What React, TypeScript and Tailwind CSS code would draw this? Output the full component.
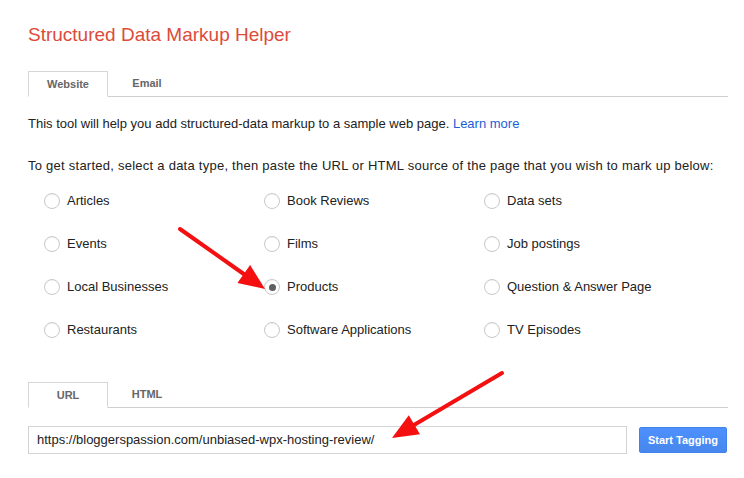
import React from "react";

const types = [
  ["Articles", "Book Reviews", "Data sets"],
  ["Events", "Films", "Job postings"],
  ["Local Businesses", "Products", "Question & Answer Page"],
  ["Restaurants", "Software Applications", "TV Episodes"],
];

const Radio: React.FC<{ checked?: boolean }> = ({ checked }) => (
  <span className="w-[16px] h-[16px] rounded-full border border-[#c8c8c8] bg-white flex items-center justify-center shrink-0 shadow-[inset_0_1px_1px_rgba(0,0,0,0.05)]">
    {checked && <span className="w-[7px] h-[7px] rounded-full bg-[#5f5f5f]" />}
  </span>
);

const Tabs: React.FC<{ items: string[] }> = ({ items }) => (
  <div className="flex h-[26px] border-b border-[#cfcfcf] w-[700px]">
    <div className="w-[80px] h-[26px] border border-[#d6d6d6] border-b-white bg-white flex items-center justify-center text-[11px] font-bold text-[#666]">
      {items[0]}
    </div>
    <div className="w-[78px] flex items-center justify-center text-[11px] font-bold text-[#666]">
      {items[1]}
    </div>
  </div>
);

const Arrow: React.FC<{ x1: number; y1: number; x2: number; y2: number }> = ({ x1, y1, x2, y2 }) => {
  const ang = Math.atan2(y2 - y1, x2 - x1);
  const len = 26;
  const w = 11;
  const bx = x2 - len * Math.cos(ang);
  const by = y2 - len * Math.sin(ang);
  const px = -Math.sin(ang) * w;
  const py = Math.cos(ang) * w;
  return (
    <g>
      <line x1={x1} y1={y1} x2={bx} y2={by} stroke="#f41010" strokeWidth={4} strokeLinecap="round" />
      <polygon points={`${x2},${y2} ${bx + px},${by + py} ${bx - px},${by - py}`} fill="#f41010" />
    </g>
  );
};

export default function App() {
  return (
    <div className="relative w-[744px] h-[478px] bg-white font-['Liberation_Sans',Arial,sans-serif] text-[#222] overflow-hidden">
      <div className="pl-[28px] pt-[23px]">
        <h1 className="text-[19px] leading-[24px] text-[#dd4b39] font-normal">Structured Data Markup Helper</h1>

        <div className="mt-[24px]">
          <Tabs items={["Website", "Email"]} />
        </div>

        <p className="mt-[19px] text-[13px] leading-[16px]">
          This tool will help you add structured-data markup to a sample web page.{" "}
          <span className="text-[#1a5fd6]">Learn more</span>
        </p>
        <p className="mt-[26px] text-[13px] leading-[16px] tracking-[0.25px]">
          To get started, select a data type, then paste the URL or HTML source of the page that you wish to mark up below:
        </p>

        <div className="mt-[19px] pl-[16px] flex flex-col gap-[27px]">
          {types.map((row, i) => (
            <div key={i} className="grid grid-cols-[220px_220px_220px] h-[16px]">
              {row.map((t) => (
                <label key={t} className="flex items-center gap-[7px] text-[13px] leading-[16px]">
                  <Radio checked={t === "Products"} />
                  <span>{t}</span>
                </label>
              ))}
            </div>
          ))}
        </div>

        <div className="mt-[44px]">
          <Tabs items={["URL", "HTML"]} />
        </div>

        <div className="mt-[18px] flex items-center gap-[12px]">
          <div className="w-[599px] h-[28px] border border-[#d4d4d4] flex items-center px-[8px] text-[13px] text-[#222]">
            https://bloggerspassion.com/unbiased-wpx-hosting-review/
          </div>
          <button className="w-[88px] h-[26px] rounded-[2px] bg-gradient-to-b from-[#4d90fe] to-[#4787ed] border border-[#3f82ea] text-white text-[11px] font-bold">
            Start Tagging
          </button>
        </div>
      </div>

      <svg className="absolute inset-0 pointer-events-none" width={744} height={478}>
        <Arrow x1={180} y1={229} x2={265} y2={289} />
        <Arrow x1={502} y1={373} x2={392} y2={438} />
      </svg>
    </div>
  );
}
